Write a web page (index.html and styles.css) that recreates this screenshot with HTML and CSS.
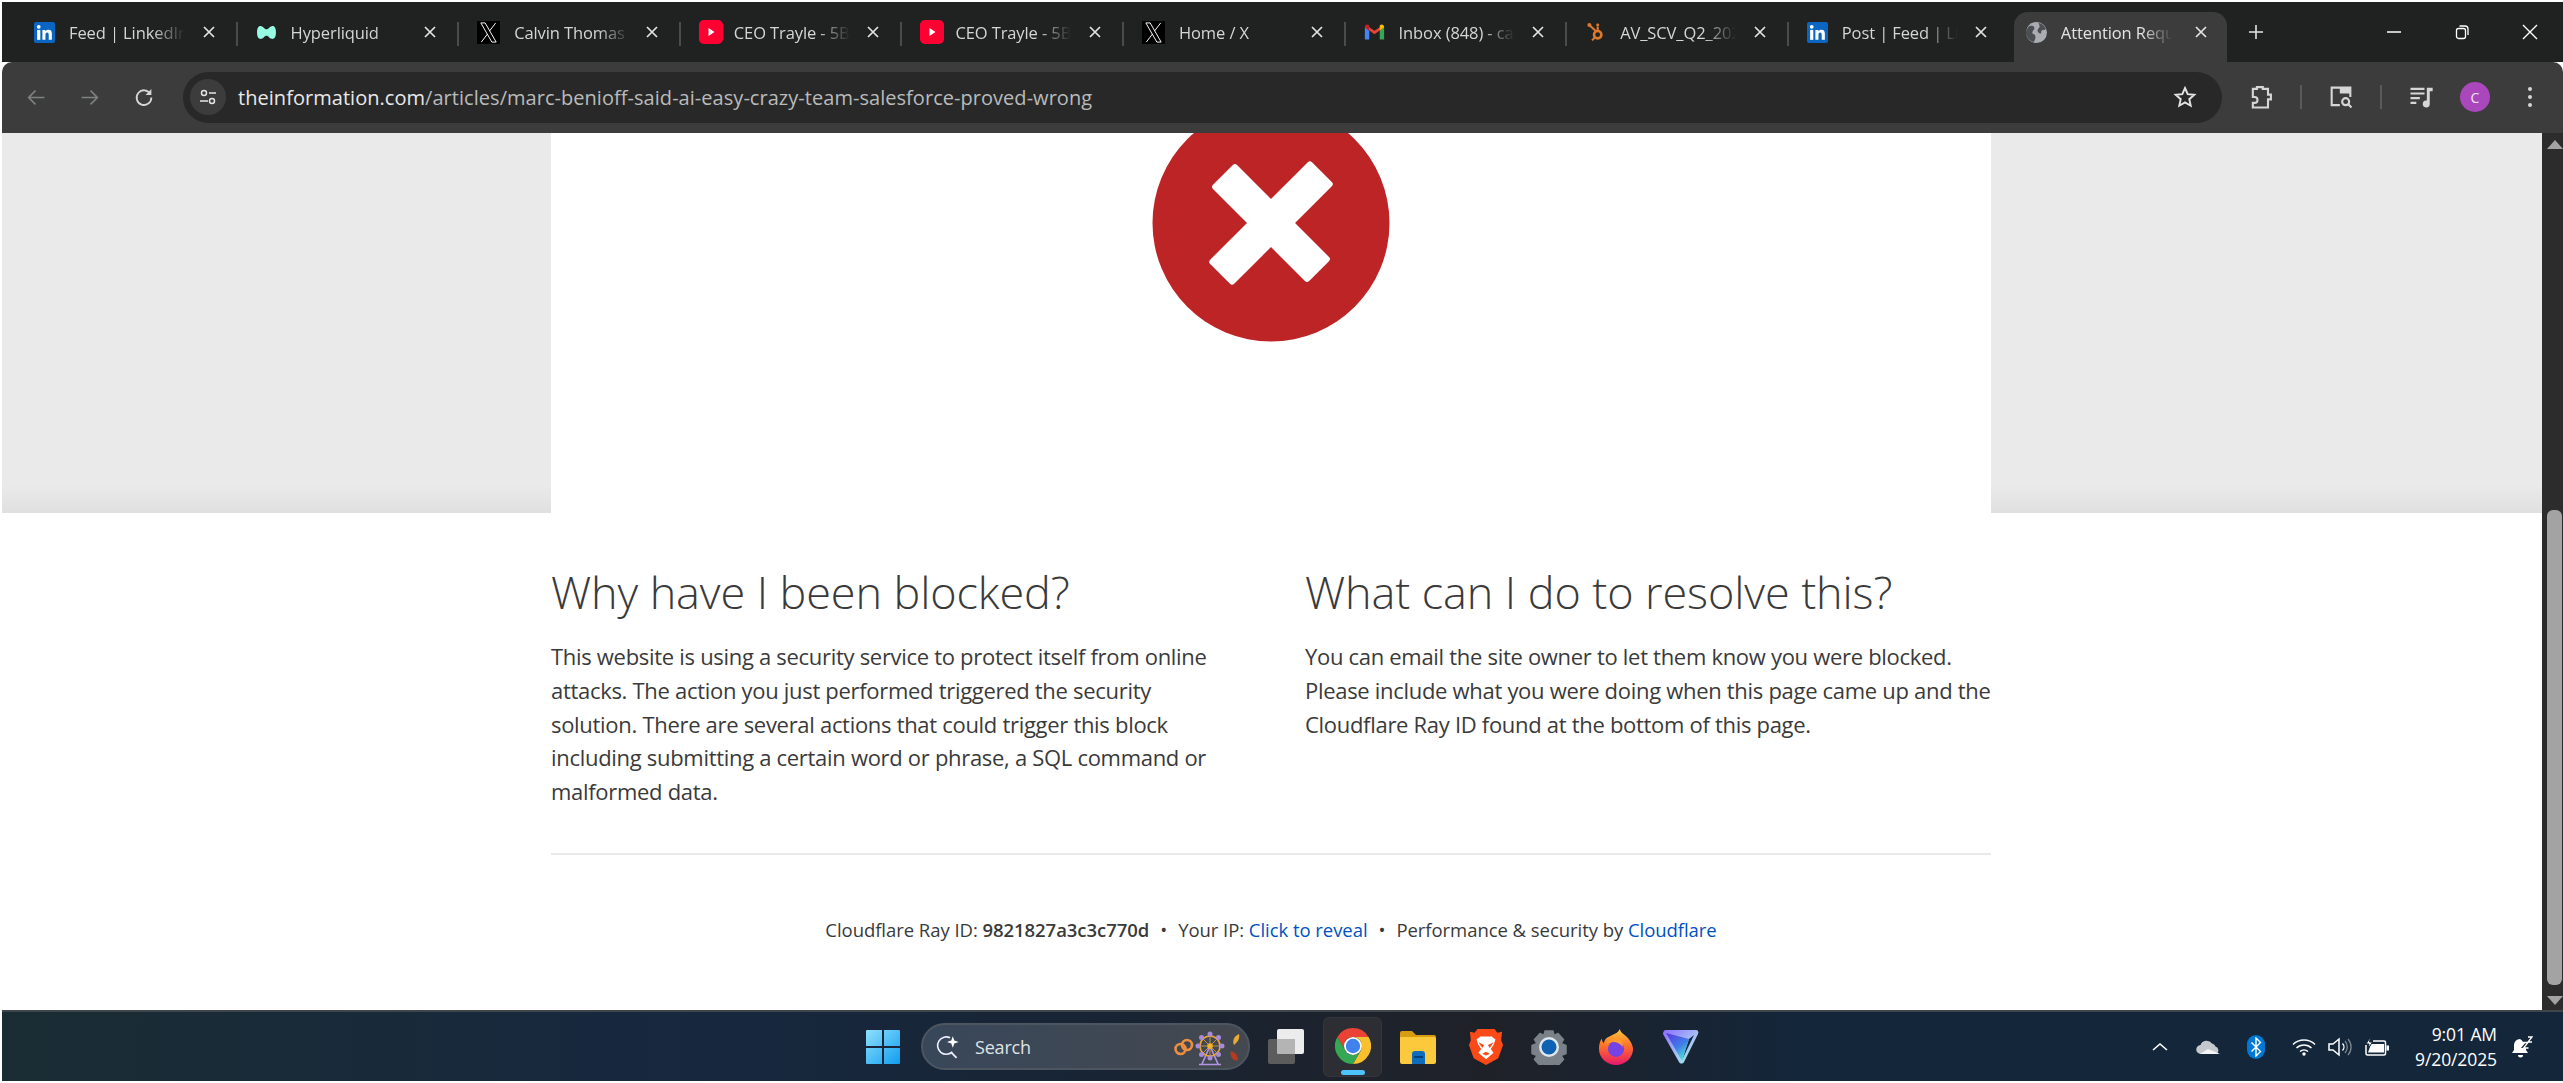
FILE: index.html
```html
<!DOCTYPE html>
<html lang="en">
<head>
    <meta charset="UTF-8">
    <title>Attention Required! | Cloudflare</title>
    <link rel="stylesheet" href="styles.css">
</head>
<body>
    <svg class="defs" width="0" height="0">
        <symbol id="i-linkedin" viewBox="0 0 20 20">
            <rect width="20" height="20" rx="2" fill="#0a66c2"/>
            <rect x="3" y="7.5" width="3" height="9.5" fill="#fff"/>
            <circle cx="4.5" cy="4.6" r="1.8" fill="#fff"/>
            <path d="M8 7.5h2.9v1.4c.6-1 1.6-1.6 2.9-1.6 2.4 0 3.2 1.5 3.2 4V17h-3v-5c0-1.200-.3-2.100-1.400-2.100-1.200 0-1.700.9-1.700 2.200V17H8z" fill="#fff"/>
        </symbol>
        <symbol id="i-x" viewBox="0 0 24 24">
            <rect width="24" height="24" fill="#000"/>
            <path d="M4 2h4.500l11.500 20h-4.500z" fill="#000" stroke="#fff" stroke-width="1"/>
            <path d="M19.500 2L13 10.500M11 13.500L4.500 22" stroke="#fff" stroke-width="1"/>
        </symbol>
        <symbol id="i-yt" viewBox="0 0 24 24">
            <rect width="24" height="24" rx="5" fill="#ff0033"/>
            <path d="M9.500 8l6 4-6 4z" fill="#fff"/>
        </symbol>
        <symbol id="i-close" viewBox="0 0 14 14">
            <path d="M2 2l10 10M12 2L2 12" stroke="#e3e3e3" stroke-width="1.700" fill="none"/>
        </symbol>
    </svg>

    <div class="browser">
        <div class="tabstrip">
            <div class="tab"><svg class="favicon"><use href="#i-linkedin"/></svg><span class="tab-title">Feed | LinkedIn</span><svg class="tab-close"><use href="#i-close"/></svg></div>
            <div class="tab"><svg class="favicon" viewBox="0 0 20 20"><path d="M1 10C1 5 3 3.500 5 4c2.500.6 3 3 5 3s2.500-2.400 5-3c2-.5 4 1 4 6s-2 6.500-4 6c-2.500-.6-3-3-5-3s-2.500 2.400-5 3c-2 .5-4-1-4-6z" fill="#97fce4"/></svg><span class="tab-title">Hyperliquid</span><svg class="tab-close"><use href="#i-close"/></svg></div>
            <div class="tab"><svg class="favicon fav-x"><use href="#i-x"/></svg><span class="tab-title">Calvin Thomas</span><svg class="tab-close"><use href="#i-close"/></svg></div>
            <div class="tab"><svg class="favicon fav-yt"><use href="#i-yt"/></svg><span class="tab-title">CEO Trayle - 5Bn</span><svg class="tab-close"><use href="#i-close"/></svg></div>
            <div class="tab"><svg class="favicon fav-yt"><use href="#i-yt"/></svg><span class="tab-title">CEO Trayle - 5Bn</span><svg class="tab-close"><use href="#i-close"/></svg></div>
            <div class="tab"><svg class="favicon fav-x"><use href="#i-x"/></svg><span class="tab-title">Home / X</span><svg class="tab-close"><use href="#i-close"/></svg></div>
            <div class="tab"><svg class="favicon" viewBox="0 0 24 24"><path d="M1 6v14h5V10z" fill="#4285f4"/><path d="M18 10v10h5V6z" fill="#34a853"/><path d="M1 6l11 8 11-8-2-2-9 6-9-6z" fill="#ea4335"/><path d="M18 4v6l5-4c0-3-3-4-5-2z" fill="#fbbc04"/><path d="M6 4v6L1 6c0-3 3-4 5-2z" fill="#c5221f"/></svg><span class="tab-title">Inbox (848) - calvin</span><svg class="tab-close"><use href="#i-close"/></svg></div>
            <div class="tab"><svg class="favicon" viewBox="0 0 20 24"><g stroke="#e0782a" fill="none"><circle cx="12.500" cy="14.500" r="4.200" stroke-width="3"/><path d="M10 10L3.500 4M12.500 10V5M9 18l-3 3" stroke-width="2.400"/></g><circle cx="3" cy="3.500" r="2.300" fill="#e0782a"/><circle cx="12.500" cy="3.500" r="1.700" fill="#e0782a"/></svg><span class="tab-title">AV_SCV_Q2_2025</span><svg class="tab-close"><use href="#i-close"/></svg></div>
            <div class="tab"><svg class="favicon"><use href="#i-linkedin"/></svg><span class="tab-title">Post | Feed | LinkedIn</span><svg class="tab-close"><use href="#i-close"/></svg></div>
            <div class="tab tab-active"><svg class="favicon" viewBox="0 0 20 20"><circle cx="10" cy="10" r="10" fill="#a9adb2"/><path d="M3 4c3-1 5 0 5 2s-2 2-2 4 3 1 3 4-1 4-2 5C3 18 0 14 0 10c0-2 1-4 3-6zM12 1c3 0 7 4 7 6-2 1-3 0-4 1s0 3-1 3-3-1-3-3 2-2 2-4z" fill="#4b4e52"/></svg><span class="tab-title">Attention Required!</span><svg class="tab-close"><use href="#i-close"/></svg></div>
            <svg class="new-tab" viewBox="0 0 16 16"><path d="M8 1v14M1 8h14" stroke="#e3e3e3" stroke-width="1.600"/></svg>
            <div class="window-controls">
                <svg viewBox="0 0 16 16"><path d="M1 8h14" stroke="#fff" stroke-width="1.500"/></svg>
                <svg viewBox="0 0 16 16"><rect x="2.500" y="4.500" width="9" height="10" rx="2" fill="none" stroke="#fff" stroke-width="1.300"/><path d="M5.500 2h5.500a3 3 0 0 1 3 3v6" fill="none" stroke="#fff" stroke-width="1.300"/></svg>
                <svg viewBox="0 0 16 16"><path d="M1 1l14 14M15 1L1 15" stroke="#fff" stroke-width="1.400"/></svg>
            </div>
        </div>

        <div class="toolbar">
            <svg class="nav-btn" viewBox="0 0 20 20"><path d="M18 10H3M9.500 3.500L3 10l6.500 6.500" fill="none" stroke="#7d7f80" stroke-width="1.600"/></svg>
            <svg class="nav-btn" viewBox="0 0 20 20"><path d="M2 10h15M10.500 3.500L17 10l-6.500 6.500" fill="none" stroke="#7d7f80" stroke-width="1.600"/></svg>
            <svg class="nav-btn" viewBox="0 0 20 20"><path d="M16 6.500A7 7 0 1 0 17 10" fill="none" stroke="#d6d6d6" stroke-width="1.700"/><path d="M17 2v5.500h-5.500z" fill="#d6d6d6"/></svg>
            <div class="omnibox">
                <div class="site-info">
                    <svg viewBox="0 0 20 20" width="20" height="20"><g fill="none" stroke="#e3e3e3" stroke-width="1.500"><circle cx="6" cy="6" r="2.500"/><circle cx="14" cy="14" r="2.500"/><path d="M11 6h7M2 14h8"/></g></svg>
                </div>
                <div class="url"><span class="url-host">theinformation.com</span>/articles/marc-benioff-said-ai-easy-crazy-team-salesforce-proved-wrong</div>
                <svg class="star" viewBox="0 0 24 24"><path d="M12 3l2.700 6.100 6.600.7-5 4.400 1.400 6.500-5.700-3.300-5.700 3.300 1.400-6.500-5-4.400 6.600-.7z" fill="none" stroke="#e3e3e3" stroke-width="1.900"/></svg>
            </div>
            <div class="tool-actions">
                <svg class="tool-icon" viewBox="0 0 24 24"><path d="M5 5h3.500V3.500h5V5H18v5h2.500v4H18v7H5v-4h1.500a2.500 2.500 0 0 0 0-5H5z" fill="none" stroke="#d6d6d6" stroke-width="1.800"/></svg>
                <span class="tool-sep"></span>
                <svg class="tool-icon" viewBox="0 0 24 24"><path d="M11 19H4V4h16v8" fill="none" stroke="#d6d6d6" stroke-width="1.800"/><rect x="11" y="4" width="9" height="5" fill="#d6d6d6"/><circle cx="16" cy="16" r="3" fill="none" stroke="#d6d6d6" stroke-width="1.800"/><path d="M18 18l3 3" stroke="#d6d6d6" stroke-width="1.800"/></svg>
                <span class="tool-sep"></span>
                <svg class="tool-icon" viewBox="0 0 24 24"><path d="M3 5h12M3 9h12M3 13h8M3 17h5" stroke="#d6d6d6" stroke-width="1.800"/><path d="M17 4h5v3h-2.500v11a3 3 0 1 1-2.500-3z" fill="#d6d6d6"/></svg>
                <div class="avatar">C</div>
                <svg class="tool-dots" viewBox="0 0 6 24"><circle cx="3" cy="4" r="2" fill="#d6d6d6"/><circle cx="3" cy="12" r="2" fill="#d6d6d6"/><circle cx="3" cy="20" r="2" fill="#d6d6d6"/></svg>
            </div>
        </div>

        <div class="viewport">
            <div class="page">
                <div class="band">
                    <div class="band-inner">
                        <svg class="block-icon" viewBox="0 0 238 238">
                            <circle cx="119" cy="119" r="118.500" fill="#bd2426"/>
                            <g fill="#fff" transform="translate(119 119)">
                                <rect x="-72" y="-17" width="144" height="34" rx="3" transform="rotate(-45)"/>
                                <rect x="-68" y="-17" width="136" height="34" rx="3" transform="rotate(45)"/>
                            </g>
                        </svg>
                    </div>
                </div>
                <div class="article">
                    <div class="columns">
                        <div>
                            <h2>Why have I been blocked?</h2>
                            <p>This website is using a security service to protect itself from online<br>attacks. The action you just performed triggered the security<br>solution. There are several actions that could trigger this block<br>including submitting a certain word or phrase, a SQL command or<br>malformed data.</p>
                        </div>
                        <div>
                            <h2>What can I do to resolve this?</h2>
                            <p>You can email the site owner to let them know you were blocked.<br>Please include what you were doing when this page came up and the<br>Cloudflare Ray ID found at the bottom of this page.</p>
                        </div>
                    </div>
                    <div class="footer-note">
                        Cloudflare Ray ID: <strong>9821827a3c3c770d</strong><span class="dot">•</span>Your IP: <a href="#">Click to reveal</a><span class="dot">•</span>Performance &amp; security by <a href="#">Cloudflare</a>
                    </div>
                </div>
            </div>
            <div class="scrollbar">
                <span class="arrow-up"></span>
                <div class="track"><div class="thumb"></div></div>
                <span class="arrow-down"></span>
            </div>
        </div>
    </div>

    <div class="taskbar">
        <svg class="start" viewBox="0 0 34 34">
            <defs><linearGradient id="win" x1="0" y1="0" x2="1" y2="1"><stop offset="0" stop-color="#8fe0fd"/><stop offset="1" stop-color="#0f9df0"/></linearGradient></defs>
            <path d="M1 0h15v16H0V1a1 1 0 0 1 1-1zM18 0h15a1 1 0 0 1 1 1v15H18zM0 18h16v16H1a1 1 0 0 1-1-1zM18 18h16v15a1 1 0 0 1-1 1H18z" fill="url(#win)"/>
        </svg>
        <div class="search">
            <svg class="search-icon" viewBox="0 0 24 24"><path d="M13 3.500a8 8 0 1 0 2 13" fill="none" stroke="#eef" stroke-width="1.500"/><path d="M14 17l5 5" stroke="#eef" stroke-width="1.700"/><path d="M15.500 2l1.400 4 4 1.400-4 1.400-1.400 4-1.400-4-4-1.400 4-1.400z" fill="#fff"/></svg>
            <span class="search-label">Search</span>
            <svg class="search-art" viewBox="0 0 68 38">
                <g fill="none" stroke="#ec8f3f" stroke-width="2.600"><circle cx="6.500" cy="21" r="5"/><circle cx="13" cy="17" r="5"/></g>
                <path d="M36 18L28 36M36 18l8 18M25 36.500h22" fill="none" stroke="#b094e0" stroke-width="1.700"/>
                <circle cx="36" cy="18" r="10" fill="none" stroke="#e8a33a" stroke-width="1.600"/>
                <path d="M26 18h20M36 8v20M29 11l14 14M43 11L29 25" stroke="#e8a33a" stroke-width=".8"/>
                <circle cx="36" cy="18" r="2.800" fill="#f2b32a"/>
                <g fill="#a78bd8"><circle cx="36" cy="6" r="2.500"/><circle cx="36" cy="30" r="2.500"/><circle cx="24" cy="18" r="2.500"/><circle cx="48" cy="18" r="2.500"/><circle cx="27.500" cy="9.500" r="2.500"/><circle cx="44.500" cy="9.500" r="2.500"/><circle cx="27.500" cy="26.500" r="2.500"/><circle cx="44.500" cy="26.500" r="2.500"/></g>
                <path d="M65 6c1 4-1 8-5 11-2-4 0-9 5-11z" fill="#e8a83a"/><path d="M57 23c4 1 7 4 7 9-1 1-3 1-4 0-3-2-4-6-3-9z" fill="#b63a20"/>
            </svg>
        </div>
        <svg class="task-icon task-view" viewBox="0 0 36 36">
            <rect x="0" y="10" width="27" height="25" rx="2" fill="#5c5c5c"/>
            <rect x="9" y="0" width="27" height="25" rx="2" fill="#ececec"/>
            <path d="M9 10h18v15H11a2 2 0 0 1-2-2z" fill="#b4b4b4"/>
        </svg>
        <div class="chrome-tile">
            <svg viewBox="0 0 36 36" width="36" height="36">
                <path d="M18 0A18 18 0 0 1 33.600 9H18A9 9 0 0 0 10.200 22.500L2.400 9A18 18 0 0 1 18 0z" fill="#ea4335"/>
                <path d="M33.600 9A18 18 0 0 1 18 36L25.800 22.500A9 9 0 0 0 18 9z" fill="#fbc02d"/>
                <path d="M2.400 9L10.200 22.500A9 9 0 0 0 25.800 22.500L18 36A18 18 0 0 1 2.400 9z" fill="#34a853"/>
                <circle cx="18" cy="18" r="9" fill="#fff"/><circle cx="18" cy="18" r="7.200" fill="#3f82ee"/>
            </svg>
            <span class="running"></span>
        </div>
        <svg class="task-icon folder" viewBox="0 0 36 34">
            <path d="M0 3a2 2 0 0 1 2-2h10l4 4h18a2 2 0 0 1 2 2v4H0z" fill="#d79c10"/>
            <path d="M0 7h34a2 2 0 0 1 2 2v23a2 2 0 0 1-2 2H2a2 2 0 0 1-2-2z" fill="#fcc93c"/>
            <path d="M12 34V24a3 3 0 0 1 3-3h7a3 3 0 0 1 3 3v10z" fill="#0f6cbd"/><path d="M14 27h9" stroke="#063f7a" stroke-width="2"/>
        </svg>
        <svg class="task-icon brave" viewBox="0 0 36 38">
            <path d="M9 0h18l3 4 5-1-1 9 2 5-5 14-13 7-13-7L0 17l2-5-1-9 5 1z" fill="#fb4a17"/>
            <path d="M12 8h12l4 3-2 6-3 4 3 4-8 7-8-7 3-4-3-4-2-6z" fill="#fff"/>
            <path d="M10 14l6 3-2 3zM26 14l-6 3 2 3zM14 26l4-2 4 2-4 2z" fill="#fb4a17"/>
        </svg>
        <svg class="task-icon gear" viewBox="0 0 36 36">
            <path d="M14 2h8l1 4.500 4-2 5.500 6-2.500 4 5 2v8l-5 2 2.500 4-5.500 6-4-2-1 4.500h-8l-1-4.500-4 2-5.500-6 2.500-4-5-2v-8l5-2-2.500-4 5.500-6 4 2z" fill="#7b8188" stroke="#7b8188" stroke-width="1.500" stroke-linejoin="round"/>
            <circle cx="18" cy="18" r="10" fill="#dfe6ec"/><circle cx="18" cy="18" r="7.500" fill="#0e62b1"/>
        </svg>
        <svg class="task-icon firefox" viewBox="0 0 36 38">
            <defs><linearGradient id="fx" x1="0" y1="0" x2="0" y2="1"><stop offset="0" stop-color="#ffc93a"/><stop offset=".5" stop-color="#ff6a2a"/><stop offset="1" stop-color="#e5186d"/></linearGradient></defs>
            <path d="M22 0c1 5 6 6 9 10 3 4 5 8 5 11a18 17 0 0 1-36 0c0-4 1-8 3-11 0 2 1 4 2 5 1-4 3-6 6-7 3-2 9-3 11-8z" fill="url(#fx)"/>
            <circle cx="18" cy="21" r="8.500" fill="#7542e5"/><path d="M7 17c5-5 14-4 18 2 1-5-2-9-7-9-5 0-9 3-11 7z" fill="#ff9b2a"/>
        </svg>
        <svg class="task-icon proton" viewBox="0 0 36 34">
            <defs>
                <linearGradient id="pv" x1="0" y1="0" x2="1" y2="1"><stop offset="0" stop-color="#8b6cff"/><stop offset=".6" stop-color="#a9c8f5"/><stop offset="1" stop-color="#8ff5e0"/></linearGradient>
                <linearGradient id="pv2" x1="0" y1="0" x2=".6" y2="1"><stop offset="0" stop-color="#5a36d8"/><stop offset=".6" stop-color="#3f7fe8"/><stop offset="1" stop-color="#4fe0d8"/></linearGradient>
            </defs>
            <path d="M3 0h30c2 0 3 2 2 4L21 32c-1 2-4 2-5 0L0 4C0 2 1 0 3 0z" fill="url(#pv)"/>
            <path d="M31 5L19 30 26 9z" fill="#14263a"/>
            <path d="M3 3l23 6L19 31z" fill="url(#pv2)"/>
        </svg>

        <div class="tray">
            <svg class="chevron" viewBox="0 0 16 10"><path d="M1 8l7-6 7 6" fill="none" stroke="#fff" stroke-width="1.600"/></svg>
            <svg class="onedrive" viewBox="0 0 24 14"><path d="M5 14a4.500 4.500 0 0 1-.5-9A6.500 6.500 0 0 1 16 3.500a4.500 4.500 0 0 1 3.500 3A4 4 0 0 1 20 14z" fill="#c4c9cd"/><path d="M4 14l8-5 5 2 7 3z" fill="#f4f5f6"/></svg>
            <div class="bluetooth"><svg viewBox="0 0 12 20" width="12" height="20"><path d="M1.500 5.500l9 9-4.500 4.500V1l4.500 4.500-9 9" fill="none" stroke="#fff" stroke-width="1.400"/></svg></div>
            <svg class="wifi" viewBox="0 0 24 18"><g fill="none" stroke="#fff" stroke-width="1.500"><path d="M1 6.500a16 16 0 0 1 22 0"/><path d="M4.500 10a11 11 0 0 1 15 0"/><path d="M8 13.500a6 6 0 0 1 8 0"/></g><circle cx="12" cy="16" r="1.700" fill="#fff"/></svg>
            <svg class="volume" viewBox="0 0 24 20"><path d="M1 7h4l6-5v16l-6-5H1z" fill="none" stroke="#fff" stroke-width="1.500"/><path d="M14.500 6.500a5 5 0 0 1 0 7" fill="none" stroke="#fff" stroke-width="1.400"/><path d="M17 4a9 9 0 0 1 0 12M20 2a12 12 0 0 1 0 16" fill="none" stroke="#7d8790" stroke-width="1.300"/></svg>
            <svg class="battery" viewBox="0 0 24 20"><path d="M8 4H19a1.500 1.500 0 0 1 1.500 1.500v11A1.500 1.500 0 0 1 19 18H2.500A1.500 1.500 0 0 1 1 16.500V8" fill="none" stroke="#fff" stroke-width="1.500"/><path d="M6 7h13v8.500H3z" fill="#fff"/><rect x="21.500" y="8.500" width="2.500" height="5" fill="#fff"/><path d="M5.500 0L1 7h3l-1 5 4.500-7H4.500z" fill="#fff" stroke="#14263a"/></svg>
            <div class="clock"><div>9:01 AM</div><div>9/20/2025</div></div>
            <svg class="bell" viewBox="0 0 22 22"><path d="M9 3a6 6 0 0 0-6 6v5l-2 3h16l-2-3v-2H10L15 6H12a6 6 0 0 0-3-3z" fill="#fff"/><path d="M7 19h5a2.500 2.500 0 0 1-5 0z" fill="#fff"/><path d="M12 6.500h5l-4.500 5.500h5M17 1h4l-4 5h4" fill="none" stroke="#fff" stroke-width="1.300"/></svg>
        </div>
    </div>
</body>
</html>
```

FILE: styles.css
```css
* {
    box-sizing: border-box;
}
html, body {
    margin: 0;
    height: 100%;
    overflow: hidden;
}
body {
    background-color: #fff;
    padding: 2px 0 0 2px;
    font-family: "Open Sans", "Noto Sans", sans-serif;
}
.defs {
    position: absolute;
}

/* tab strip */
.tabstrip {
    height: 60px;
    background-color: #202222;
    display: flex;
    padding-left: 14px;
}
.tab {
    width: 221.6px;
    height: 50px;
    margin-top: 10px;
    padding-left: 18px;
    padding-bottom: 10px;
    display: flex;
    align-items: center;
    position: relative;
    color: #d4d5d5;
    flex: none;
}
.tab::after {
    content: "";
    position: absolute;
    right: 0;
    top: 10px;
    width: 2px;
    height: 24px;
    background-color: #4a4c4c;
}
.favicon {
    width: 21px;
    height: 21px;
    flex: none;
}
.fav-x {
    width: 23px;
    height: 23px;
}
.fav-yt {
    width: 24px;
    height: 24px;
    margin-right: -3px;
}
.tab-title {
    width: 116px;
    margin-left: 14px;
    font-size: 16.5px;
    letter-spacing: -0.1px;
    white-space: nowrap;
    overflow: hidden;
    -webkit-mask-image: linear-gradient(to right, #000 72%, transparent 100%);
    mask-image: linear-gradient(to right, #000 72%, transparent 100%);
}
.tab-close {
    width: 14px;
    height: 14px;
    margin-left: auto;
    margin-right: 22px;
    flex: none;
}
.tab:nth-child(9)::after {
    display: none;
}
.tab-active {
    width: 213px;
    margin-left: 3.5px;
    padding-left: 12px;
    background-color: #3c3c3c;
    border-radius: 14px 14px 0 0;
    color: #e3e3e3;
}
.tab-active .tab-close {
    margin-right: 19px;
}
.tab-active .tab-title {
    width: 112px;
}
.tab-active::after {
    display: none;
}
.new-tab {
    width: 16px;
    height: 16px;
    margin: 22px 0 0 21px;
    flex: none;
}
.window-controls {
    margin-left: auto;
    display: flex;
    padding: 22px 25px 0 0;
    gap: 52px;
}
.window-controls svg {
    width: 16px;
    height: 16px;
}

/* toolbar */
.toolbar {
    height: 71px;
    background-color: #3c3c3c;
    border-radius: 10px 10px 0 0;
    display: flex;
    align-items: center;
    padding: 0 0 1px 7px;
}
.nav-btn {
    width: 54px;
    height: 21px;
    flex: none;
}
.omnibox {
    width: 2039px;
    height: 51px;
    margin-left: 12px;
    background-color: #282828;
    border-radius: 26px;
    display: flex;
    align-items: center;
    padding: 0 25px 0 7px;
    flex: none;
}
.site-info {
    width: 36px;
    height: 36px;
    border-radius: 50%;
    background-color: #3c3c3c;
    display: flex;
    align-items: center;
    justify-content: center;
    flex: none;
}
.url {
    margin-left: 12px;
    font-size: 20px;
    letter-spacing: 0.04px;
    color: #b9bbbb;
    white-space: nowrap;
}
.url-host {
    color: #e8e8e8;
}
.star {
    width: 24px;
    height: 24px;
    margin-left: auto;
}
.tool-actions {
    display: flex;
    align-items: center;
    gap: 19px;
    margin-left: 19px;
}
.tool-icon {
    width: 40px;
    height: 28px;
}
.tool-sep {
    width: 2px;
    height: 24px;
    background-color: #5a5a5a;
}
.avatar {
    width: 30px;
    height: 30px;
    border-radius: 50%;
    background-color: #ab47bc;
    color: #f3e5f5;
    font-size: 14px;
    display: flex;
    align-items: center;
    justify-content: center;
}
.tool-dots {
    width: 6px;
    height: 24px;
    margin-left: 18px;
}

/* page */
.viewport {
    height: 877px;
    display: flex;
}
.page {
    flex: 1;
    overflow: hidden;
    background-color: #fff;
}
.band {
    height: 380px;
    overflow: hidden;
    background: linear-gradient(to bottom, #eaeaea 0, #eaeaea 352px, #e0e0e0 380px);
}
.band-inner {
    width: 1440px;
    height: 380px;
    margin-left: 549px;
    background-color: #fff;
    overflow: hidden;
}
.block-icon {
    display: block;
    width: 238px;
    height: 238px;
    margin: -29px auto 0;
}
.article {
    width: 1440px;
    margin-left: 549px;
    color: #3a3a3a;
}
.columns {
    display: grid;
    grid-template-columns: 754px 686px;
    padding-top: 49px;
    padding-bottom: 44px;
    border-bottom: 2px solid #eaeaea;
}
h2 {
    margin: 0 0 18px;
    font-size: 45px;
    line-height: 60px;
    font-weight: 300;
    letter-spacing: -0.1px;
    white-space: nowrap;
}
p {
    margin: 0;
    font-size: 22px;
    line-height: 33.75px;
    letter-spacing: -0.3px;
    white-space: nowrap;
}
.footer-note {
    margin-top: 60px;
    text-align: center;
    font-size: 18.5px;
    line-height: 30px;
    letter-spacing: -0.05px;
    white-space: nowrap;
}
.footer-note a {
    color: #0051c3;
    text-decoration: none;
}
.footer-note strong {
    font-weight: 600;
}
.dot {
    margin: 0 11px;
}

/* scrollbar */
.scrollbar {
    width: 21.5px;
    background-color: #2c2c2c;
    display: flex;
    flex-direction: column;
    align-items: center;
    padding: 7px 0 5px 5px;
}
.arrow-up, .arrow-down {
    width: 0;
    height: 0;
    border-left: 8px solid transparent;
    border-right: 8px solid transparent;
    flex: none;
}
.arrow-up {
    border-bottom: 9px solid #a3a3a3;
}
.arrow-down {
    border-top: 9px solid #a3a3a3;
}
.track {
    flex: 1;
    width: 100%;
    padding: 361px 1px 11px 0;
}
.thumb {
    height: 100%;
    background-color: #a3a3a3;
    border-radius: 6px;
}

/* taskbar */
.taskbar {
    height: 71px;
    border-top: 2px solid #3f4549;
    background: linear-gradient(to right, #1a2c33 0, #17283f 26%, #172536 40%, #1f2128 58%, #14263a 70%, #14263a 100%);
    display: flex;
    align-items: center;
    padding-left: 864px;
}
.start {
    width: 34px;
    height: 34px;
    flex: none;
}
.search {
    width: 329px;
    height: 47px;
    margin-left: 21px;
    border-radius: 24px;
    background: linear-gradient(to right, #38475a, #44484f);
    border: 2px solid #4d5660;
    display: flex;
    align-items: center;
    padding-left: 13px;
    flex: none;
}
.search-icon {
    width: 26px;
    height: 26px;
}
.search-label {
    margin-left: 13px;
    font-size: 18px;
    letter-spacing: -0.2px;
    color: #dfe2e5;
}
.search-art {
    width: 68px;
    height: 38px;
    margin-left: auto;
    margin-right: 6px;
}
.task-icon {
    width: 36px;
    height: 36px;
    flex: none;
}
.task-view {
    margin-left: 18px;
}
.chrome-tile {
    width: 59px;
    height: 60px;
    margin-left: 19px;
    border-radius: 6px;
    background-color: #2c2e33;
    border: 1px solid #34363b;
    display: flex;
    flex-direction: column;
    align-items: center;
    padding-top: 10px;
    position: relative;
}
.running {
    width: 24px;
    height: 5px;
    margin-top: 6px;
    border-radius: 3px;
    background-color: #4cc2ff;
}
.folder {
    margin-left: 18px;
}
.brave {
    margin-left: 32px;
}
.gear {
    margin-left: 27px;
}
.firefox {
    margin-left: 31px;
}
.proton {
    margin-left: 29px;
}
.tray {
    margin-left: 453px;
    display: flex;
    align-items: center;
}
.chevron {
    width: 16px;
    height: 10px;
}
.onedrive {
    width: 24px;
    height: 14px;
    margin-left: 28px;
}
.bluetooth {
    width: 18px;
    height: 24px;
    margin-left: 27px;
    border-radius: 9px;
    background-color: #0078d4;
    display: flex;
    align-items: center;
    justify-content: center;
}
.wifi {
    width: 24px;
    height: 18px;
    margin-left: 27px;
}
.volume {
    width: 24px;
    height: 20px;
    margin-left: 12px;
}
.battery {
    width: 24px;
    height: 20px;
    margin-left: 13px;
}
.clock {
    width: 106px;
    margin-left: 2px;
    text-align: right;
    color: #fff;
    font-size: 17.5px;
    line-height: 25px;
    letter-spacing: -0.1px;
    white-space: nowrap;
}
.bell {
    width: 22px;
    height: 22px;
    margin-left: 14px;
}
```
